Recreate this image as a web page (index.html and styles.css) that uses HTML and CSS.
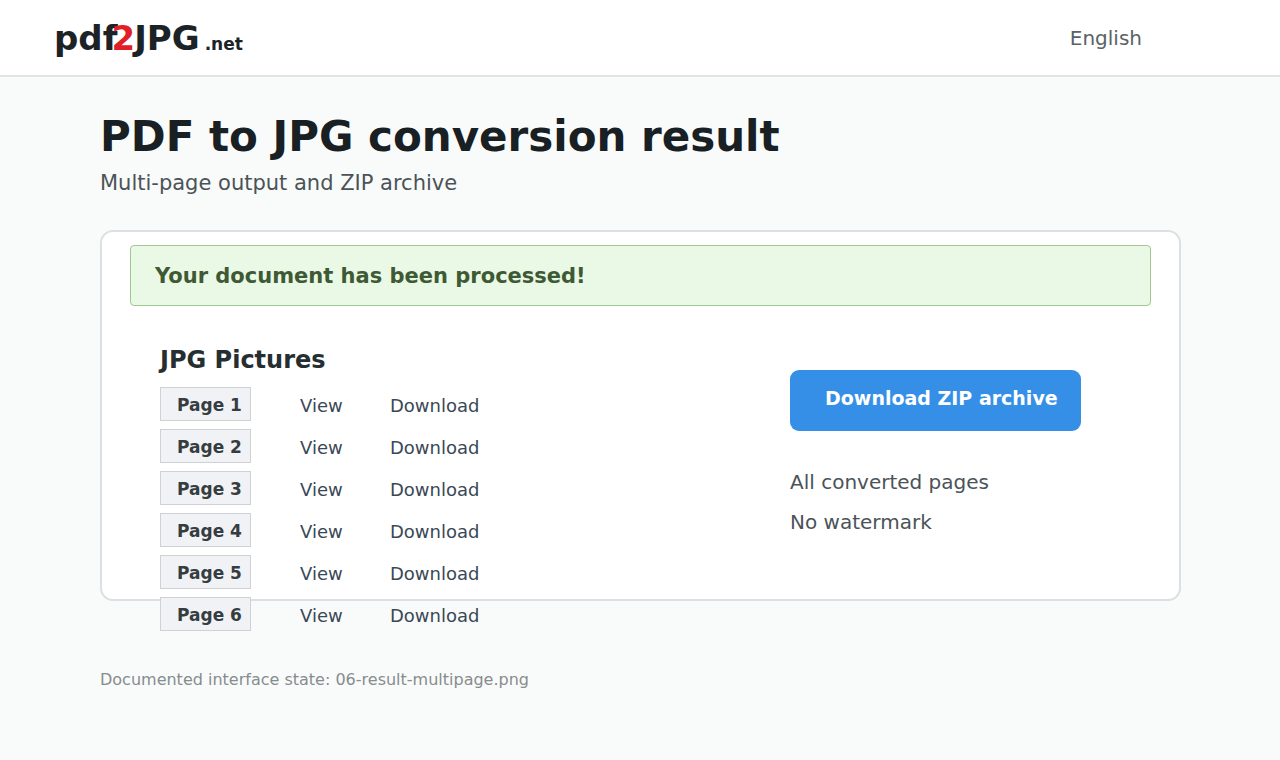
FILE: index.html
```html
<!DOCTYPE html>
<html lang="en">
<head>
	<meta charset="utf-8">
	<title>PDF to JPG conversion result</title>
	<link rel="stylesheet" href="styles.css">
</head>
<body>
	<header class="header">
		<a href="#" class="logo"><span>pdf</span><span class="logo-two">2</span><span class="logo-jpg">JPG</span><span class="logo-net">.net</span></a>
		<a href="#" class="language">English</a>
	</header>

	<main class="content">
		<h1>PDF to JPG conversion result</h1>
		<p class="subtitle">Multi-page output and ZIP archive</p>

		<section class="result">
			<div class="alert" role="status">Your document has been processed!</div>
			<div class="result-columns">
				<div class="pictures">
					<h2>JPG Pictures</h2>
					<table class="pages">
						<tr><th scope="row"><span class="page-name">Page 1</span></th><td><a href="#">View</a></td><td><a href="#">Download</a></td></tr>
						<tr><th scope="row"><span class="page-name">Page 2</span></th><td><a href="#">View</a></td><td><a href="#">Download</a></td></tr>
						<tr><th scope="row"><span class="page-name">Page 3</span></th><td><a href="#">View</a></td><td><a href="#">Download</a></td></tr>
						<tr><th scope="row"><span class="page-name">Page 4</span></th><td><a href="#">View</a></td><td><a href="#">Download</a></td></tr>
						<tr><th scope="row"><span class="page-name">Page 5</span></th><td><a href="#">View</a></td><td><a href="#">Download</a></td></tr>
						<tr><th scope="row"><span class="page-name">Page 6</span></th><td><a href="#">View</a></td><td><a href="#">Download</a></td></tr>
					</table>
				</div>
				<div class="archive">
					<button type="button" class="zip-button">Download ZIP archive</button>
					<p>All converted pages</p>
					<p>No watermark</p>
				</div>
			</div>
		</section>

		<footer class="footer">Documented interface state: 06-result-multipage.png</footer>
	</main>
</body>
</html>
```
FILE: styles.css
```css
* {
	box-sizing: border-box;
}
body {
	margin: 0;
	background-color: #f9fbfa;
	color: #4b5358;
	font-family: "DejaVu Sans", Verdana, sans-serif;
	font-size: 20px;
}
a {
	color: inherit;
	text-decoration: none;
}
h1, h2, p {
	margin: 0;
}

.header {
	display: flex;
	justify-content: space-between;
	align-items: center;
	padding: 18px 138px 17px 54px;
	background-color: #fff;
	border-bottom: 2px solid #e1e3e7;
}
.logo {
	display: flex;
	align-items: baseline;
	color: #1c2326;
	font-size: 34px;
	font-weight: bold;
	line-height: 40px;
}
.logo-two {
	margin-left: -6px;
	color: #e02024;
}
.logo-jpg {
	margin-left: -1px;
}
.logo-net {
	margin-left: 5px;
	font-size: 17px;
	line-height: 20px;
}
.language {
	color: #5a6265;
	line-height: 24px;
}

.content {
	padding: 35px 99px 34px 100px;
}
h1 {
	color: #182024;
	font-size: 42px;
	line-height: 50px;
}
.subtitle {
	margin-top: 7px;
	font-size: 21px;
	line-height: 28px;
}

.result {
	margin-top: 33px;
	padding: 13px 28px 0;
	background-color: #fff;
	border: 2px solid #dcdfe3;
	border-radius: 13px;
}
.alert {
	padding: 16px 24px 15px;
	background-color: #eaf8e6;
	border: 1px solid #9fc893;
	border-radius: 4px;
	color: #3e5a34;
	font-size: 21px;
	font-weight: bold;
	line-height: 28px;
}
.result-columns {
	display: grid;
	grid-template-columns: 1fr 331px;
	padding: 40px 30px 0;
}

/* the last row hangs below the card */
.pictures {
	margin-bottom: -32px;
}
h2 {
	color: #262e31;
	font-size: 24px;
	line-height: 28px;
}
.pages {
	margin-top: 13px;
	border-collapse: collapse;
	color: #3a4856;
	font-size: 18px;
}
.pages th,
.pages td {
	padding: 0 0 8px;
	text-align: left;
}
.pages th {
	width: 140px;
}
.pages td {
	width: 90px;
	padding-top: 2px;
}
.pages tr:last-child > * {
	padding-bottom: 0;
}
.page-name {
	display: block;
	width: 91px;
	padding: 6px 0 4px 16px;
	background-color: #f1f2f5;
	border: 1px solid #cfd2d5;
	color: #363d40;
	font-size: 17px;
	line-height: 22px;
}

.archive {
	padding-top: 24px;
	line-height: 40px;
}
.zip-button {
	display: block;
	margin-bottom: 31px;
	padding: 16px 23px 21px 35px;
	background-color: #368fe7;
	border: 0;
	border-radius: 9px;
	color: #fff;
	font: bold 19px/24px "DejaVu Sans", Verdana, sans-serif;
}

.footer {
	margin-top: 69px;
	color: #878c8f;
	font-size: 16px;
	line-height: 20px;
}
```
